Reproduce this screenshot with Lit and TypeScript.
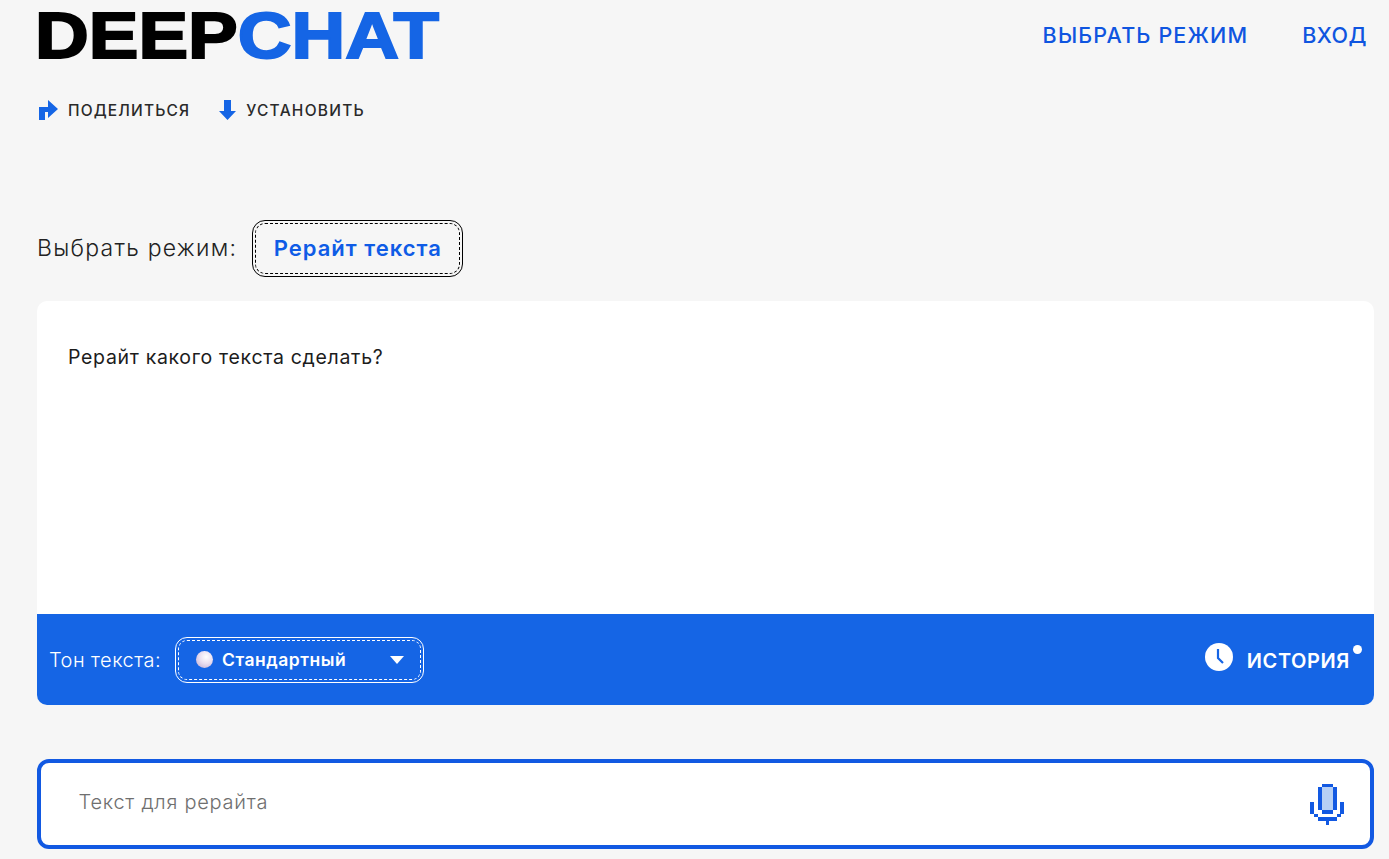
import { LitElement, html, css } from 'lit';
import { customElement } from 'lit/decorators.js';

@customElement('app-root')
export class AppRoot extends LitElement {
  static styles = css`
    :host {
      display: block;
      height: 859px;
      overflow: hidden;
      background: #f6f6f6;
      font-family: Inter, "Noto Sans", sans-serif;
      color: #222;
    }
    .page { padding: 0 15px 0 37px; }

    .header { display: flex; justify-content: space-between; align-items: flex-start; height: 72px; }
    .logo {
      font-family: "Liberation Sans", Arial, sans-serif;
      font-size: 65px;
      font-weight: 700;
      line-height: 72px;
      color: #000;
      -webkit-text-stroke: 2px currentColor;
      transform: scaleX(1.145);
      transform-origin: left center;
      white-space: nowrap;
      margin-left: -2px;
    }
    .logo span { color: #1565e5; }
    .nav { display: flex; gap: 54px; padding: 21px 7px 0 0; }
    .nav a { font-size: 21.500px; font-weight: 500; line-height: 28px; letter-spacing: 1.150px; color: #0f55e0; }
    .nav a:last-child { letter-spacing: 0.500px; }

    .actions { display: flex; gap: 28px; margin-top: 27px; height: 22px; }
    .action { display: flex; align-items: center; gap: 9px; font-size: 15.500px; font-weight: 500; letter-spacing: 1.150px; color: #2a2a2a; }
    .action + .action { letter-spacing: 1.250px; }
    .action svg { display: block; }

    .mode { display: flex; align-items: center; gap: 15px; margin-top: 99px; }
    .mode-label { font-size: 23px; font-weight: 300; letter-spacing: 1.250px; color: #222; margin-top: -1px; }
    .frame {
      border: 1.500px solid #000;
      border-radius: 13px;
      padding: 2px;
    }
    .frame-inner {
      border: 1px dashed #000;
      border-radius: 10px;
      padding: 0 17.500px 2px;
      height: 47px;
      display: flex;
      align-items: center;
      font-size: 22px;
      font-weight: 600;
      letter-spacing: 1px;
      color: #0f5ce6;
    }

    .card { margin-top: 24px; border-radius: 10px; overflow: hidden; }
    .chat { background: #fff; height: 313px; box-sizing: border-box; padding: 43px 31px 0; font-size: 19.500px; line-height: 26px; letter-spacing: 0.680px; color: #1c1c1c; }
    .toolbar {
      background: #1565e5;
      height: 91px;
      box-sizing: border-box;
      padding: 0 12px;
      display: flex;
      align-items: center;
      color: #fff;
    }
    .tone { font-size: 20px; font-weight: 300; letter-spacing: 0.450px; margin-right: 14px; }
    .select { border: 1px solid #fff; border-radius: 12px; padding: 2px; }
    .select-inner {
      border: 1px dashed #fff;
      border-radius: 9px;
      width: 241px;
      height: 38px;
      display: flex;
      align-items: center;
    }
    .sphere {
      width: 17px;
      height: 17px;
      border-radius: 50%;
      margin-left: 17px;
      background: radial-gradient(circle at 60% 35%, #fff 0%, #e9def0 45%, #b9a4cd 100%);
    }
    .select-name { font-size: 17.500px; font-weight: 600; letter-spacing: 0.500px; margin-left: 9px; flex: 1; }
    .caret { margin-right: 16px; display: block; }
    .history { margin-left: auto; display: flex; align-items: center; gap: 14px; position: relative; padding-right: 12px; margin-top: -5px; }
    .history span { font-size: 20px; font-weight: 600; letter-spacing: 0.600px; margin-top: 7px; }
    .history svg { display: block; }
    .dot { position: absolute; right: 0; top: 3px; width: 9px; height: 9px; border-radius: 50%; background: #fff; }

    .input {
      margin-top: 54px;
      height: 90px;
      box-sizing: border-box;
      border: 4.500px solid #1259e2;
      border-radius: 12px;
      background: #fff;
      display: flex;
      align-items: center;
      justify-content: space-between;
      padding: 0 26px 0 37.500px;
    }
    .placeholder { font-size: 20px; font-weight: 300; letter-spacing: 0.750px; color: #6f6f6f; margin-top: -5px; }
    .mic { display: block; shape-rendering: crispEdges; }
  `;

  render() {
    return html`
      <div class="page">
        <div class="header">
          <div class="logo">DEEP<span>CHAT</span></div>
          <div class="nav">
            <a>ВЫБРАТЬ РЕЖИМ</a>
            <a>ВХОД</a>
          </div>
        </div>

        <div class="actions">
          <div class="action">
            <svg width="22" height="22" viewBox="0 0 22 22"><path fill="#1565e5" d="M2 21V8h9V1l10 9-10 9v-6H8v8z"/></svg>
            ПОДЕЛИТЬСЯ
          </div>
          <div class="action">
            <svg width="19" height="22" viewBox="0 0 19 22"><path fill="#1565e5" d="M6 1h7v11h5l-8.500 9L1 12h5z"/></svg>
            УСТАНОВИТЬ
          </div>
        </div>

        <div class="mode">
          <div class="mode-label">Выбрать режим:</div>
          <div class="frame"><div class="frame-inner">Рерайт текста</div></div>
        </div>

        <div class="card">
          <div class="chat">Рерайт какого текста сделать?</div>
          <div class="toolbar">
            <div class="tone">Тон текста:</div>
            <div class="select">
              <div class="select-inner">
                <div class="sphere"></div>
                <div class="select-name">Стандартный</div>
                <svg class="caret" width="14" height="8" viewBox="0 0 14 8"><path fill="#fff" d="M0 0h14L7 8z"/></svg>
              </div>
            </div>
            <div class="history">
              <svg width="28" height="28" viewBox="0 0 28 28">
                <circle cx="14" cy="14" r="14" fill="#fff"/>
                <path fill="none" stroke="#1565e5" stroke-width="2.200" d="M13 6v9l5 5"/>
              </svg>
              <span>ИСТОРИЯ</span>
              <div class="dot"></div>
            </div>
          </div>
        </div>

        <div class="input">
          <div class="placeholder">Текст для рерайта</div>
          <svg class="mic" width="34" height="41" viewBox="0 0 34 41">
            <rect x="12" y="3" width="11" height="23" fill="#b5cff5"/>
            <g fill="#1259e2">
              <rect x="12" y="0" width="11" height="3"/>
              <rect x="8" y="3" width="4" height="23"/>
              <rect x="23" y="3" width="4" height="23"/>
              <rect x="12" y="26" width="11" height="4"/>
              <rect x="0" y="18" width="4" height="12"/>
              <rect x="30" y="18" width="4" height="12"/>
              <rect x="4" y="30" width="4" height="3"/>
              <rect x="27" y="30" width="4" height="3"/>
              <rect x="8" y="33" width="19" height="4"/>
              <rect x="16" y="37" width="3" height="4"/>
            </g>
          </svg>
        </div>
      </div>
    `;
  }
}
